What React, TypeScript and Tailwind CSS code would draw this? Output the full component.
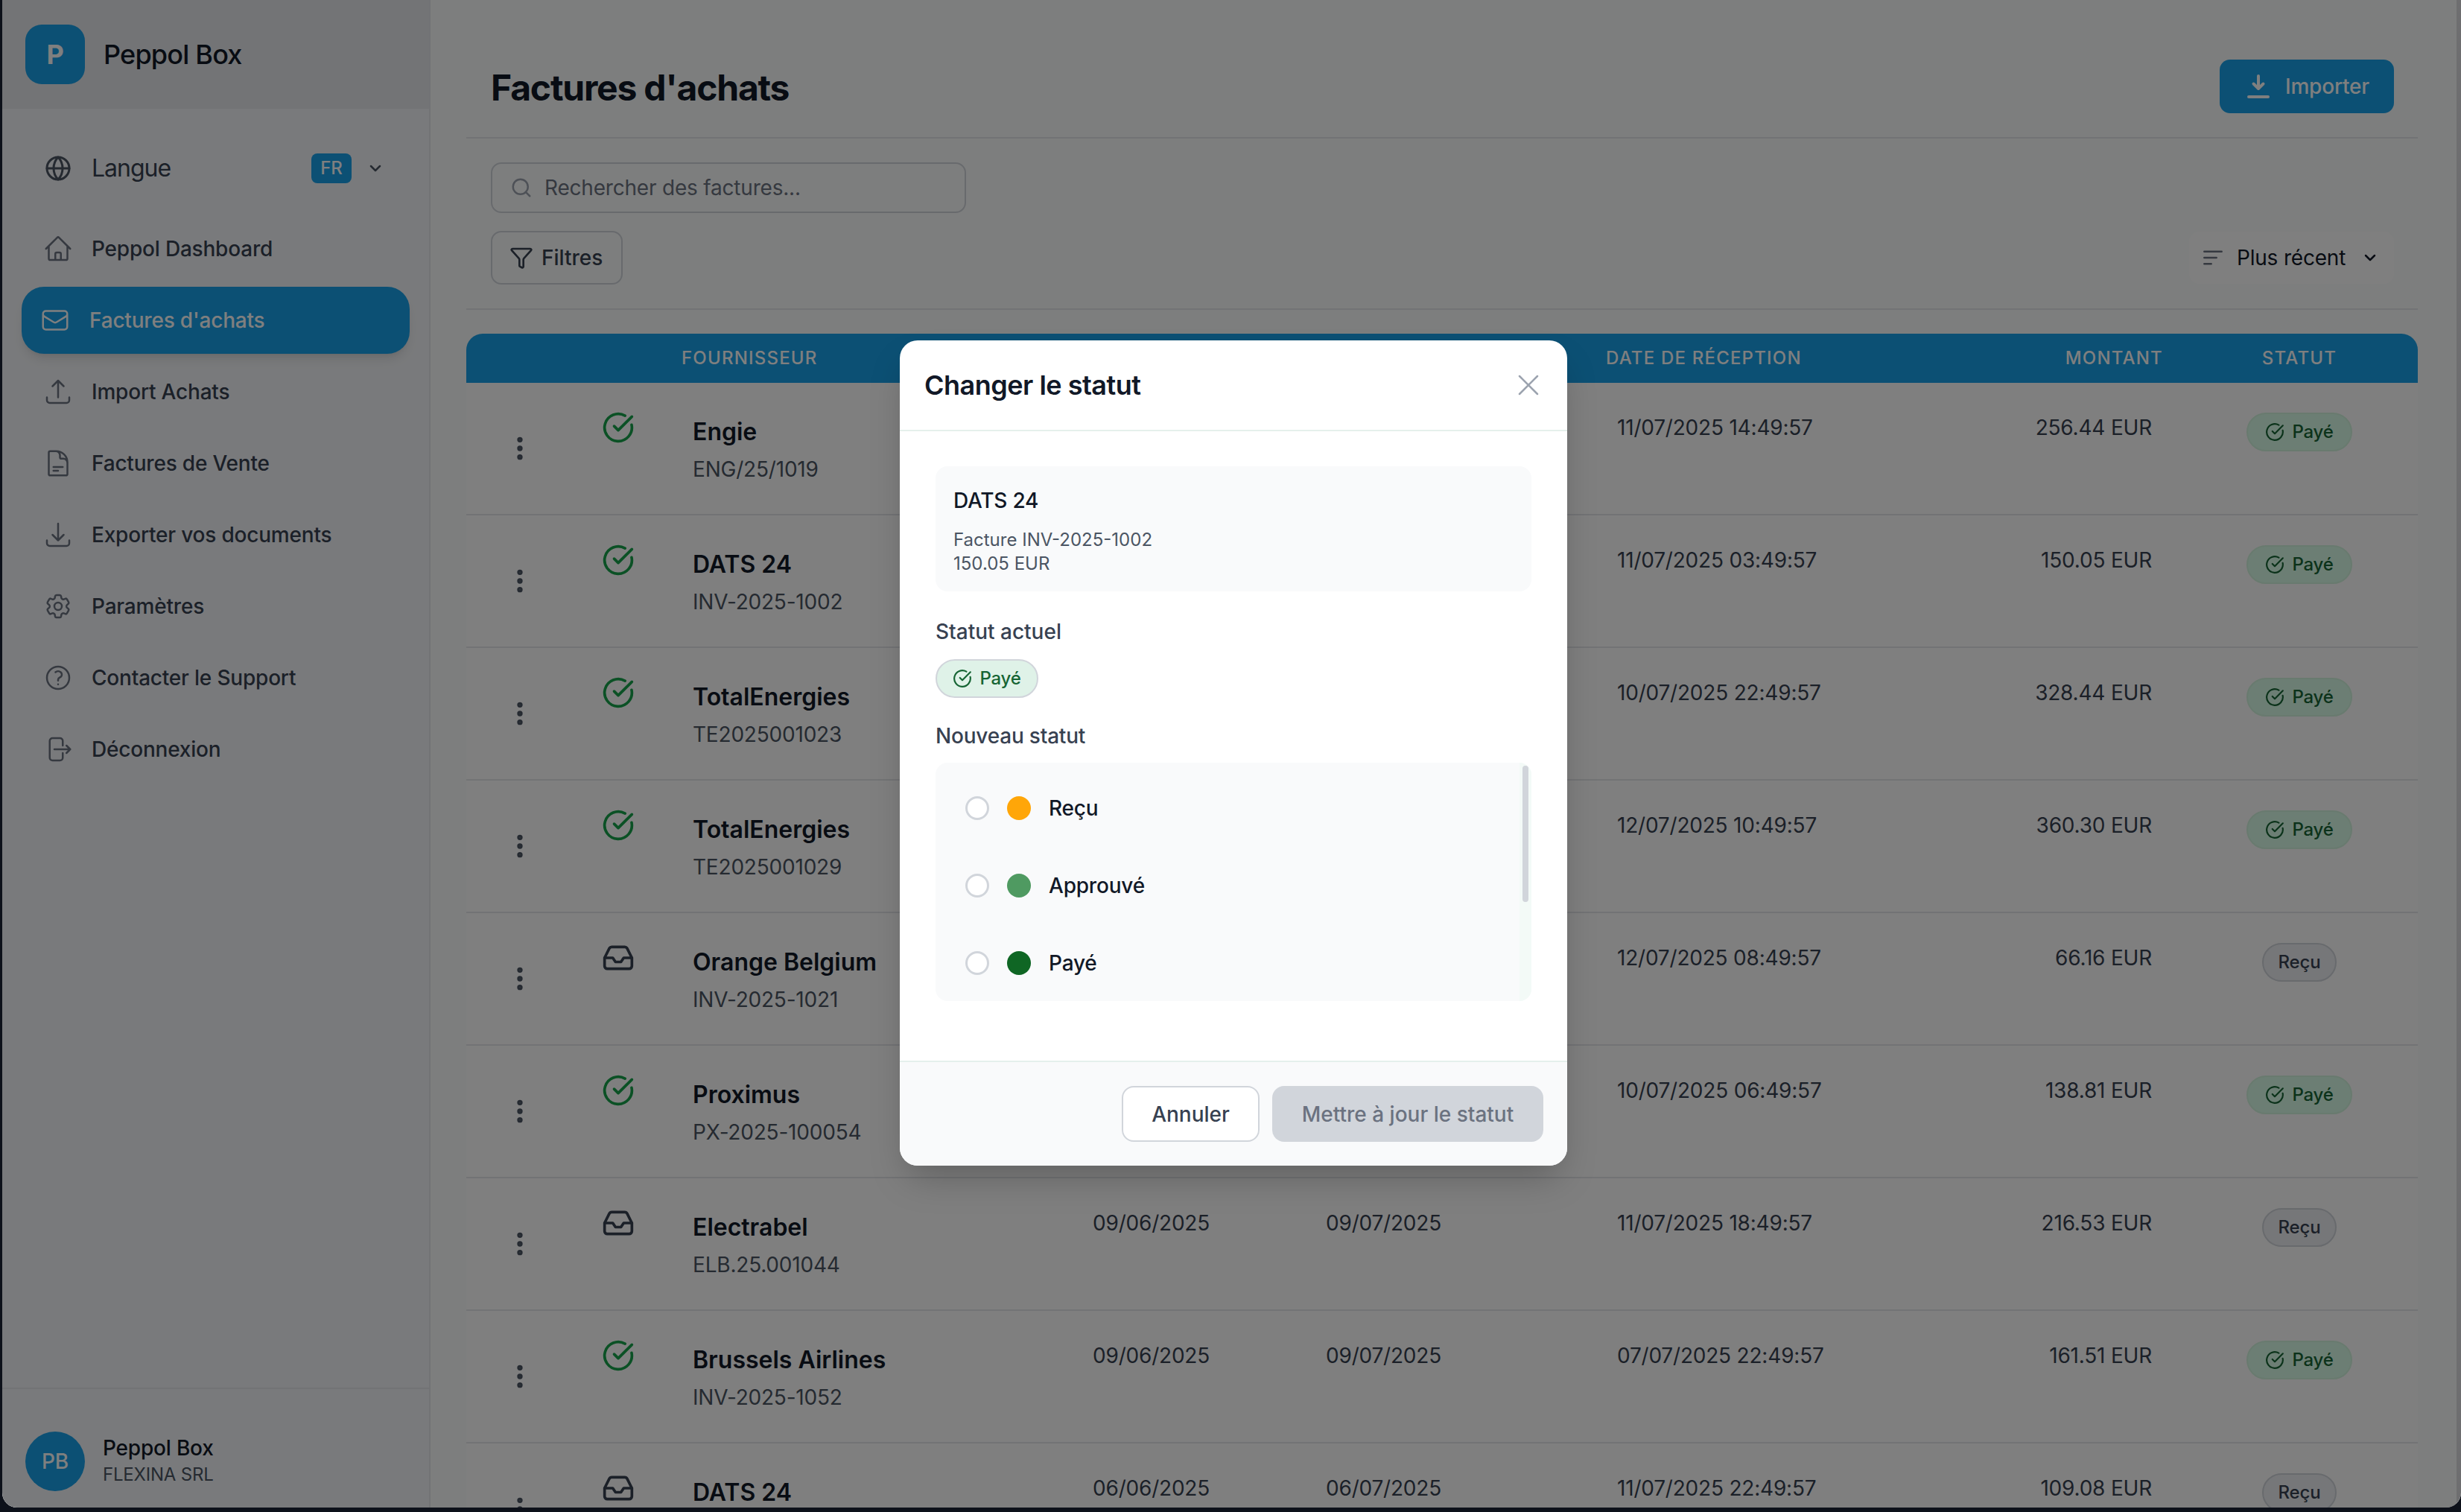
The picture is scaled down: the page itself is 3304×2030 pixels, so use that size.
import { Globe, ChevronDown, CircleCheckBig, Search, Filter, X, EllipsisVertical, Inbox } from "lucide-react";
import { HiOutlineHome, HiOutlineEnvelope, HiOutlineArrowUpTray, HiOutlineDocumentText, HiOutlineArrowDownTray, HiOutlineCog6Tooth, HiOutlineQuestionMarkCircle, HiOutlineArrowRightOnRectangle } from "react-icons/hi2";

const nav = [
  { label: "Peppol Dashboard", Icon: HiOutlineHome },
  { label: "Factures d'achats", Icon: HiOutlineEnvelope, active: true },
  { label: "Import Achats", Icon: HiOutlineArrowUpTray },
  { label: "Factures de Vente", Icon: HiOutlineDocumentText },
  { label: "Exporter vos documents", Icon: HiOutlineArrowDownTray },
  { label: "Paramètres", Icon: HiOutlineCog6Tooth },
  { label: "Contacter le Support", Icon: HiOutlineQuestionMarkCircle },
  { label: "Déconnexion", Icon: HiOutlineArrowRightOnRectangle },
];

const rows = [
  { name: "Engie", ref: "ENG/25/1019", d1: "", d2: "", rec: "11/07/2025 14:49:57", amount: "256.44 EUR", paid: true },
  { name: "DATS 24", ref: "INV-2025-1002", d1: "", d2: "", rec: "11/07/2025 03:49:57", amount: "150.05 EUR", paid: true },
  { name: "TotalEnergies", ref: "TE2025001023", d1: "", d2: "", rec: "10/07/2025 22:49:57", amount: "328.44 EUR", paid: true },
  { name: "TotalEnergies", ref: "TE2025001029", d1: "", d2: "", rec: "12/07/2025 10:49:57", amount: "360.30 EUR", paid: true },
  { name: "Orange Belgium", ref: "INV-2025-1021", d1: "", d2: "", rec: "12/07/2025 08:49:57", amount: "66.16 EUR", paid: false },
  { name: "Proximus", ref: "PX-2025-100054", d1: "", d2: "", rec: "10/07/2025 06:49:57", amount: "138.81 EUR", paid: true },
  { name: "Electrabel", ref: "ELB.25.001044", d1: "09/06/2025", d2: "09/07/2025", rec: "11/07/2025 18:49:57", amount: "216.53 EUR", paid: false },
  { name: "Brussels Airlines", ref: "INV-2025-1052", d1: "09/06/2025", d2: "09/07/2025", rec: "07/07/2025 22:49:57", amount: "161.51 EUR", paid: true },
  { name: "DATS 24", ref: "", d1: "06/06/2025", d2: "06/07/2025", rec: "11/07/2025 22:49:57", amount: "109.08 EUR", paid: false },
];

const cols = "grid grid-cols-[144px_120px_577px_313px_391px_400px_318px_357px]";

function PaidPill() {
  return (
    <span className="inline-flex h-[52px] w-[142px] items-center justify-center gap-[10px] rounded-full border-2 border-[#d2f5de] bg-[#d8fce8] text-[24px] font-medium text-[#166534]">
      <CircleCheckBig className="size-[26px]" strokeWidth={2} />
      Payé
    </span>
  );
}

export default function App() {
  return (
    <div className="h-[2030px] w-[3304px] overflow-hidden bg-[#0d111a] pb-[6px] pl-[3px] font-['Inter',sans-serif] tracking-[-0.2px]">
      <div className="relative flex h-[2024px] overflow-hidden rounded-b-[20px] bg-[#fbfdfc]">
        <aside className="flex w-[575px] shrink-0 flex-col border-r-2 border-[#e5e7eb] bg-[#f3f5f8]">
          <div className="flex h-[146px] items-center gap-[25px] bg-[#e6e8ec] pl-[31px]">
            <div className="flex size-[80px] items-center justify-center rounded-[22px] bg-[#18a0e8] text-[36px] font-bold text-white">P</div>
            <span className="text-[36px] font-medium tracking-[-0.8px] text-[#111827]">Peppol Box</span>
          </div>
          <div className="mt-[40px] flex h-[80px] items-center pl-[57px]">
            <Globe className="size-[36px] text-[#4b5563]" strokeWidth={2} />
            <span className="ml-[27px] w-[160px] text-[32px] font-normal tracking-[-1px] text-[#374151]">Langue</span>
            <span className="ml-[135px] flex h-[40px] w-[54px] items-center justify-center rounded-[8px] bg-[#18a0e8] text-[24px] font-medium text-white">FR</span>
            <ChevronDown className="ml-[20px] size-[24px] text-[#4b5563]" strokeWidth={2.5} />
          </div>
          <nav className="mt-[20px] flex flex-col">
            {nav.map(({ label, Icon, active }) =>
              active ? (
                <a key={label} className="mx-[26px] my-[3px] flex h-[90px] items-center gap-[26px] rounded-[30px] bg-[#18a0e8] pl-[25px] text-[28px] font-medium text-white shadow-lg">
                  <Icon className="size-[40px]" />
                  {label}
                </a>
              ) : (
                <a key={label} className="flex h-[96px] items-center gap-[25px] pl-[55px] text-[28px] font-medium text-[#374151]">
                  <Icon className="size-[40px] text-[#6b7280]" />
                  {label}
                </a>
              )
            )}
          </nav>
          <div className="mt-auto flex h-[161px] items-center gap-[24px] border-t-2 border-[#e5e7eb] pl-[31px] pt-[34px]">
            <div className="flex size-[80px] items-center justify-center rounded-full bg-[#18a0e8] text-[28px] font-medium text-white">PB</div>
            <div className="mt-[-4px] flex flex-col">
              <span className="text-[28px] leading-[40px] font-medium text-[#111827]">Peppol Box</span>
              <span className="text-[24px] leading-[32px] text-[#4b5563]">FLEXINA SRL</span>
            </div>
          </div>
        </aside>

        <main className="min-w-0 flex-1 pl-[48px] pr-[52px]">
          <div className="flex h-[186px] items-center justify-between border-b-2 border-[#e5e7eb] pl-[33px] pr-[32px] pt-[48px]">
            <h1 className="mt-[4px] text-[48px] font-bold tracking-[-1.2px] text-[#111827]">Factures d'achats</h1>
            <button className="flex h-[72px] w-[234px] items-center gap-[20px] rounded-[14px] bg-[#18a0e8] pl-[36px] text-[28px] font-medium text-white">
              <svg className="size-[32px]" viewBox="0 0 32 32" fill="none" stroke="currentColor" strokeWidth="4" strokeLinecap="round" strokeLinejoin="round">
                <path d="M16 2v16M9.500 12.500 16 19l6.500-6.500M3 30h26" />
              </svg>
              Importer
            </button>
          </div>
          <div className="h-[230px] border-b-2 border-[#e5e7eb] pl-[33px] pr-[32px] pt-[32px]">
            <div className="flex h-[68px] w-[638px] items-center rounded-[14px] border-2 border-[#d1d5db] pl-[24px]">
              <Search className="size-[30px] text-[#9ca3af]" strokeWidth={2} />
              <span className="ml-[16px] text-[28px] text-[#6b7280]">Rechercher des factures...</span>
            </div>
            <div className="mt-[24px] flex items-center justify-between">
              <button className="flex h-[72px] w-[177px] items-center gap-[11px] rounded-[14px] border-2 border-[#d1d5db] pl-[23px] text-[28px] font-medium tracking-normal text-[#374151]">
                <Filter className="size-[32px]" strokeWidth={2} />
                Filtres
              </button>
              <div className="flex h-[70px] w-[275px] items-center rounded-[14px] bg-[#ffffff] pl-[18px] text-[28px] font-normal text-[#111827]">
                <svg className="size-[28px] text-[#6b7280]" viewBox="0 0 24 24" fill="none" stroke="currentColor" strokeWidth="2.2" strokeLinecap="round">
                  <path d="M2 5h20M2 12h14M2 19h8" />
                </svg>
                <span className="ml-[18px]">Plus récent</span>
                <ChevronDown className="ml-[21px] size-[24px]" strokeWidth={2.5} />
              </div>
            </div>
          </div>

          <div className="mt-[32px] overflow-hidden rounded-t-[22px] bg-white">
            <div className={`${cols} h-[66px] items-center bg-[#18a0e8] text-[24px] font-medium uppercase tracking-[1.2px] text-white`}>
              <span />
              <span />
              <span className="pl-[25px]">Fournisseur</span>
              <span />
              <span />
              <span className="ml-[-15px]">Date de réception</span>
              <span className="mr-[-15px] text-right">Montant</span>
              <span className="pl-[39px] text-center">Statut</span>
            </div>
            {rows.map((r) => (
              <div key={r.name + r.rec} className={`${cols} h-[178px] border-b-2 border-[#e5e7eb] bg-white`}>
                <div className="flex items-center justify-center">
                  <EllipsisVertical className="size-[40px] text-[#4b5563]" strokeWidth={2.4} />
                </div>
                <div className="flex justify-center pt-[38px]">
                  {r.paid ? (
                    <CircleCheckBig className="size-[44px] text-[#16a34a]" strokeWidth={2} />
                  ) : (
                    <Inbox className="size-[44px] text-[#374151]" strokeWidth={2} />
                  )}
                </div>
                <div className="pl-[40px] pt-[42px]">
                  <div className="text-[32px] leading-[48px] font-semibold tracking-normal text-[#111827]">{r.name}</div>
                  {r.ref && <div className="mt-[6px] text-[28px] leading-[40px] text-[#4b5563]">{r.ref}</div>}
                </div>
                <div className="pt-[40px] text-[28px] leading-[40px] text-[#374151]">{r.d1}</div>
                <div className="pt-[40px] text-[28px] leading-[40px] text-[#374151]">{r.d2}</div>
                <div className="pt-[40px] text-[28px] leading-[40px] text-[#374151]">{r.rec}</div>
                <div className="pt-[40px] text-right text-[28px] leading-[40px] text-[#374151]">{r.amount}</div>
                <div className="flex justify-center pl-[39px] pt-[40px]">
                  {r.paid ? (
                    <PaidPill />
                  ) : (
                    <span className="flex h-[52px] w-[100px] items-center justify-center rounded-full border-2 border-[#d1d5db] bg-[#eceef2] text-[24px] font-medium text-[#374151]">Reçu</span>
                  )}
                </div>
              </div>
            ))}
          </div>
        </main>
        <div className="w-[6px] shrink-0 bg-[#dcdde0]" />

        <div className="absolute inset-0 flex items-center justify-center bg-black/50 pb-[2px] pl-[5px]">
          <div className="w-[896px] overflow-hidden rounded-[24px] bg-white shadow-2xl">
            <div className="flex h-[122px] items-center justify-between border-b-2 border-[#e5f0ec] pl-[33px] pr-[28px]">
              <h2 className="text-[36px] font-semibold tracking-[-0.5px] text-[#111827]">Changer le statut</h2>
              <X className="size-[48px] text-[#9ca3af]" strokeWidth={1.25} />
            </div>
            <div className="h-[845px] px-[48px] pt-[47px]">
              <div className="h-[168px] rounded-[16px] bg-[#f9fafb] pl-[24px] pt-[26px]">
                <div className="text-[28px] leading-[40px] font-medium text-[#111827]">DATS 24</div>
                <div className="mt-[17px] text-[24px] leading-[32px] tracking-normal text-[#4b5563]">Facture INV-2025-1002</div>
                <div className="text-[24px] leading-[32px] tracking-normal text-[#4b5563]">150.05 EUR</div>
              </div>
              <div className="mt-[34px] text-[28px] leading-[40px] font-medium tracking-normal text-[#374151]">Statut actuel</div>
              <div className="mt-[17px] flex">
                <span className="inline-flex h-[52px] w-[138px] items-center justify-center gap-[10px] rounded-full border-2 border-[#d1d5db] bg-[#dff2e8] text-[24px] font-medium text-[#166534]">
                  <CircleCheckBig className="size-[26px]" strokeWidth={2} />
                  Payé
                </span>
              </div>
              <div className="mt-[31px] text-[28px] leading-[40px] font-medium text-[#374151]">Nouveau statut</div>
              <div className="mt-[16px] flex h-[320px] overflow-hidden rounded-[16px] bg-[#f9fafb]">
                <div className="flex-1 pl-[40px] pt-[9px]">
                  {[
                    ["Reçu", "bg-[#ffa608]"],
                    ["Approuvé", "bg-[#4f9a61]"],
                    ["Payé", "bg-[#0f6624]"],
                  ].map(([label, color]) => (
                    <div key={label} className="flex h-[104px] items-center">
                      <span className="size-[32px] rounded-full border-[3px] border-[#d1d5db] bg-white" />
                      <span className={`ml-[24px] size-[32px] rounded-full ${color}`} />
                      <span className="ml-[24px] text-[28px] font-medium text-[#111827]">{label}</span>
                    </div>
                  ))}
                </div>
                <div className="w-[16px] bg-[#f3faf7] pt-[4px]">
                  <div className="ml-[4px] h-[183px] w-[8px] rounded-full bg-[#d1d5db]" />
                </div>
              </div>
            </div>
            <div className="flex h-[141px] items-start justify-end gap-[17px] border-t-2 border-[#e5f0ec] bg-[#f9fafb] pr-[32px] pt-[32px]">
              <button className="h-[75px] w-[185px] rounded-[16px] border-2 border-[#d1d5db] bg-white text-[28px] font-medium tracking-normal text-[#374151]">Annuler</button>
              <button className="h-[75px] w-[364px] rounded-[16px] bg-[#d1d5db] text-[28px] font-medium tracking-normal text-[#6b7280]">Mettre à jour le statut</button>
            </div>
          </div>
        </div>
      </div>
    </div>
  );
}
